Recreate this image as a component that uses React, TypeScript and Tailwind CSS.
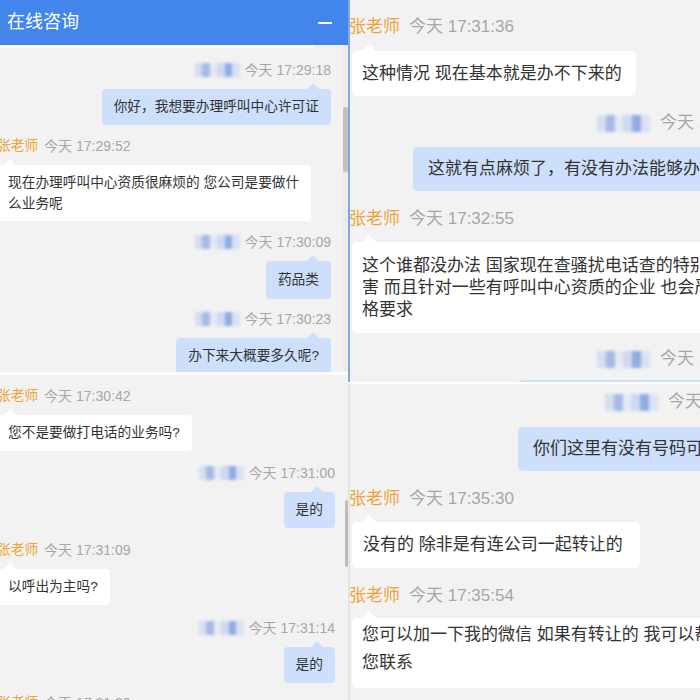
import React from "react";

const FONT = "font-['Liberation_Sans','Noto_Sans_CJK_SC',sans-serif]";

function Blob({ big }: { big?: boolean }) {
  return (
    <div className={big ? "flex h-[17px] w-[53px] shrink-0 opacity-90 blur-[1.5px]" : "flex h-[14px] w-[45px] shrink-0 opacity-90 blur-[1.5px]"}>
      <div className="flex-1 bg-[#d3dcf0]" />
      <div className="flex-1 bg-[#9cb4e6]" />
      <div className="flex-1 bg-[#e4e9f5]" />
      <div className="flex-1 bg-[#c9d6f2]" />
      <div className="flex-1 bg-[#86a5e3]" />
      <div className="flex-1 bg-[#d8e0f3]" />
    </div>
  );
}

function UpTail({ color, side }: { color: "blue" | "white"; side: "left" | "right" }) {
  const c = color === "blue" ? "border-b-[#cddffb]" : "border-b-white";
  const s = side === "right" ? "right-[12px]" : "left-[8px]";
  return (
    <span
      className={`absolute -top-[6px] ${s} h-0 w-0 border-x-[6px] border-b-[6px] border-x-transparent ${c}`}
    />
  );
}

/* ---------- small tiles (left column) ---------- */

function UserMeta({ time, className = "" }: { time: string; className?: string }) {
  return (
    <div className={`flex h-[20px] items-center justify-end gap-[5px] ${className}`}>
      <Blob />
      <span className="text-[14px] leading-[20px] text-[#a6a6a6]">今天 {time}</span>
    </div>
  );
}

function AgentMeta({ time, className = "" }: { time: string; className?: string }) {
  return (
    <div className={`-ml-[3px] flex h-[20px] items-center gap-[6px] ${className}`}>
      <span className="text-[13.7px] leading-[20px] text-[#f0a238]">张老师</span>
      <span className="text-[14px] leading-[20px] text-[#a6a6a6]">今天 {time}</span>
    </div>
  );
}

function UserBubble({ children, className = "" }: { children: React.ReactNode; className?: string }) {
  return (
    <div className={`flex justify-end ${className}`}>
      <div className="relative rounded-[4px] bg-[#cddffb] px-[12px] py-[9px] text-[13.7px] leading-[18px] text-[#333]">
        <UpTail color="blue" side="right" />
        {children}
      </div>
    </div>
  );
}

function AgentBubble({ children, className = "" }: { children: React.ReactNode; className?: string }) {
  return (
    <div className={`flex ${className}`}>
      <div className="relative -ml-[4px] whitespace-nowrap rounded-[4px] bg-white px-[12px] py-[9px] text-[13.7px] leading-[18px] text-[#333]">
        <UpTail color="white" side="left" />
        {children}
      </div>
    </div>
  );
}

/* ---------- large tiles (right column) ---------- */

function UserMetaBig({ time, offset, className = "" }: { time: string; offset: string; className?: string }) {
  return (
    <div className={`flex h-[24px] w-max items-center gap-[10px] whitespace-nowrap ${offset} ${className}`}>
      <Blob big />
      <span className="text-[17px] leading-[24px] text-[#a6a6a6]">今天 {time}</span>
    </div>
  );
}

function AgentMetaBig({ time, className = "" }: { time: string; className?: string }) {
  return (
    <div className={`-ml-[1px] flex h-[24px] items-center gap-[9px] ${className}`}>
      <span className="text-[17px] leading-[24px] text-[#f0a238]">张老师</span>
      <span className="text-[17px] leading-[24px] text-[#a6a6a6]">今天 {time}</span>
    </div>
  );
}

function UserBubbleBig({ children, offset, className = "" }: { children: React.ReactNode; offset: string; className?: string }) {
  return (
    <div
      className={`relative w-max whitespace-nowrap rounded-[5px] bg-[#cddffb] pb-[11px] pl-[15px] pr-[15px] pt-[11px] text-[17px] leading-[22px] text-[#333] ${offset} ${className}`}
    >
      {children}
    </div>
  );
}

function AgentBubbleBig({ children, className = "" }: { children: React.ReactNode; className?: string }) {
  return (
    <div
      className={`relative ml-[2px] w-max whitespace-nowrap rounded-[5px] bg-white pl-[10px] pr-[14px] text-[17px] text-[#333] ${className}`}
    >
      <span className="absolute -top-[7px] left-[10px] h-0 w-0 border-x-[7px] border-b-[7px] border-x-transparent border-b-white" />
      {children}
    </div>
  );
}

export default function App() {
  return (
    <div className={`flex h-[700px] w-[700px] overflow-hidden bg-white ${FONT}`}>
      {/* left column */}
      <div className="flex w-[348px] shrink-0 flex-col gap-[3px]">
        {/* tile A */}
        <div className="relative h-[372px] overflow-hidden bg-[#f2f2f2]">
          <div className="flex h-[45px] items-center justify-between bg-[#4285eb] pl-[7px] pr-[16px]">
            <span className="text-[18px] text-white">在线咨询</span>
            <span className="h-[2px] w-[14px] bg-white" />
          </div>
          <div className="h-[3px] w-[313px] bg-white" />
          <div className="pr-[17px]">
            <UserMeta time="17:29:18" className="mt-[12px]" />
            <UserBubble className="mt-[9px]">你好，我想要办理呼叫中心许可证</UserBubble>
            <AgentMeta time="17:29:52" className="mt-[11px]" />
            <AgentBubble className="mt-[9px]">
              <div className="-my-[2px] leading-[21px]">
                现在办理呼叫中心资质很麻烦的 您公司是要做什
                <br />
                么业务呢
              </div>
            </AgentBubble>
            <UserMeta time="17:30:09" className="mt-[11px]" />
            <UserBubble className="mt-[9px]">
              <div className="py-[1px]">药品类</div>
            </UserBubble>
            <UserMeta time="17:30:23" className="mt-[10px]" />
            <UserBubble className="mt-[9px]">办下来大概要多久呢?</UserBubble>
          </div>
          <div className="absolute bottom-0 right-0 top-[45px] w-[5px] bg-[#ececec]">
            <div className="absolute left-0 top-[62px] h-[65px] w-[5px] rounded-[2px] bg-[#c1c1c1]" />
          </div>
        </div>

        {/* tile B */}
        <div className="relative flex-1 overflow-hidden bg-[#f2f2f2] pr-[13px]">
          <AgentMeta time="17:30:42" className="mt-[11px]" />
          <AgentBubble className="mt-[9px]">您不是要做打电话的业务吗?</AgentBubble>
          <UserMeta time="17:31:00" className="mt-[12px]" />
          <UserBubble className="mt-[9px]">是的</UserBubble>
          <AgentMeta time="17:31:09" className="mt-[12px]" />
          <AgentBubble className="mt-[9px]">以呼出为主吗?</AgentBubble>
          <UserMeta time="17:31:14" className="mt-[13px]" />
          <UserBubble className="mt-[9px]">是的</UserBubble>
          <AgentMeta time="17:31:20" className="mt-[10px]" />
          <div className="absolute right-0 top-[125px] h-[67px] w-[3px] rounded-[2px] bg-[#bdbdbd]" />
        </div>
      </div>

      {/* right column */}
      <div className="flex min-w-0 flex-1 flex-col gap-[2px]">
        {/* tile C */}
        <div className="h-[382px] overflow-hidden border-l-2 border-[#7ea6ea] bg-[#f2f2f2]">
          <AgentMetaBig time="17:31:36" className="mt-[15px]" />
          <AgentBubbleBig className="mt-[12px] pb-[11px] pt-[12px] leading-[22px]">
            这种情况 现在基本就是办不下来的
          </AgentBubbleBig>
          <UserMetaBig time="17:31:58" offset="ml-[247px]" className="mt-[15px]" />
          <UserBubbleBig offset="ml-[63px]" className="mt-[12px]">
            这就有点麻烦了，有没有办法能够办理吗
          </UserBubbleBig>
          <AgentMetaBig time="17:32:55" className="mt-[16px]" />
          <AgentBubbleBig className="mt-[11px] pb-[12px] pt-[13px] leading-[22px]">
            这个谁都没办法 国家现在查骚扰电话查的特别厉
            <br />
            害 而且针对一些有呼叫中心资质的企业 也会严
            <br />
            格要求
          </AgentBubbleBig>
          <UserMetaBig time="17:33:40" offset="ml-[247px]" className="mt-[14px]" />
          <UserBubbleBig offset="ml-[168px]" className="mt-[9px]">
            你们这里有没有号码可以转让
          </UserBubbleBig>
        </div>

        {/* tile D */}
        <div className="min-h-0 flex-1 overflow-hidden border-l-2 border-[#e4e4e4] bg-[#f2f2f2]">
          <UserMetaBig time="17:34:12" offset="ml-[255px]" className="mt-[6px]" />
          <UserBubbleBig offset="ml-[168px]" className="mt-[13px]">
            你们这里有没有号码可以转让
          </UserBubbleBig>
          <AgentMetaBig time="17:35:30" className="mt-[16px]" />
          <AgentBubbleBig className="mt-[11px] pb-[12px] pl-[11px] pr-[17px] pt-[12px] leading-[22px]">
            没有的 除非是有连公司一起转让的
          </AgentBubbleBig>
          <AgentMetaBig time="17:35:54" className="mt-[16px]" />
          <AgentBubbleBig className="mt-[10px] pb-[11px] pt-[3px] leading-[28px]">
            您可以加一下我的微信 如果有转让的 我可以帮
            <br />
            您联系
          </AgentBubbleBig>
        </div>
      </div>
    </div>
  );
}
